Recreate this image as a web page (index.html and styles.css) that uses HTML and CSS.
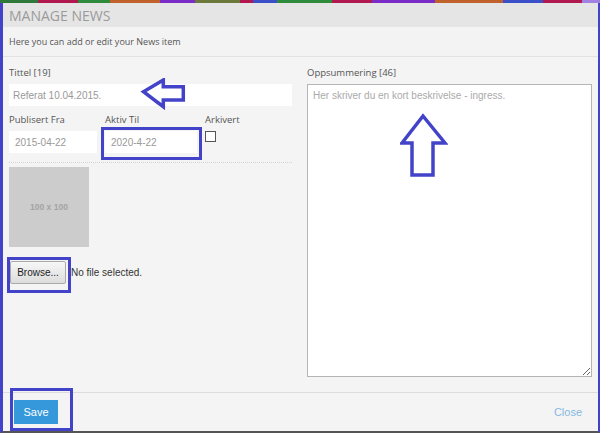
FILE: index.html
```html
<!DOCTYPE html>
<html lang="no">
<head>
    <meta charset="UTF-8">
    <meta name="viewport" content="width=device-width, initial-scale=1.0">
    <title>Manage News</title>
    <link rel="stylesheet" href="styles.css">
</head>
<body>
    <div class="stripe"></div>
    <div class="modal">
        <div class="modal-head">
            <h2>MANAGE NEWS</h2>
        </div>
        <div class="modal-sub">Here you can add or edit your News item</div>

        <div class="modal-body">
            <div class="col-left">
                <label>Tittel [19]</label>
                <div class="field">
                    <input class="text-input title-input" type="text" value="Referat 10.04.2015.">
                    <!-- annotation arrow -->
                    <svg class="arrow-left" width="46" height="32" viewBox="0 0 46 32">
                        <path d="M3.5 13.7 L23.3 2 L23.3 8.7 L43.3 8.7 L43.3 22 L23.3 22 L23.3 28.7 Z" />
                    </svg>
                </div>

                <div class="row3">
                    <div>
                        <label>Publisert Fra</label>
                        <input class="text-input date-input" type="text" value="2015-04-22">
                    </div>
                    <div>
                        <label>Aktiv Til</label>
                        <div class="field">
                            <input class="text-input date-input" type="text" value="2020-4-22">
                            <span class="mark mark-date"></span>
                        </div>
                    </div>
                    <div>
                        <label>Arkivert</label>
                        <input class="check" type="checkbox">
                    </div>
                </div>

                <div class="divider"></div>

                <div class="thumb">100 x 100</div>

                <div class="file-row">
                    <span class="field">
                        <button class="browse">Browse...</button>
                        <span class="mark mark-browse"></span>
                    </span>
                    <span class="file-name">No file selected.</span>
                </div>
            </div>

            <div class="col-right">
                <label>Oppsummering [46]</label>
                <div class="field">
                    <textarea class="summary" placeholder="Her skriver du en kort beskrivelse - ingress."></textarea>
                    <svg class="arrow-up" width="48" height="66" viewBox="0 0 48 66">
                        <path d="M23 3 L45 30 L33 30 L33 62 L12 62 L12 30 L2 30 Z" />
                    </svg>
                </div>
            </div>
        </div>

        <div class="modal-foot">
            <span class="field">
                <button class="save">Save</button>
                <span class="mark mark-save"></span>
            </span>
            <a class="close" href="#">Close</a>
        </div>
    </div>
</body>
</html>
```

FILE: styles.css
```css
* {
    box-sizing: border-box;
}
body {
    margin: 0;
    font-family: 'Open Sans', sans-serif;
    background: #f4f4f4;
}
.stripe {
    height: 3px;
    background: linear-gradient(90deg,
        #2f7a3a 0 38px, #b0184f 38px 78px, #2e8b3c 78px 110px,
        #c0602a 110px 160px, #7a2bc8 160px 195px, #6b7a3a 195px 240px,
        #b0184f 240px 253px, #3a4fc8 253px 277px, #2e8b3c 277px 332px,
        #b0184f 332px 372px, #7a2bc8 372px 435px, #c0602a 435px 503px,
        #3a4fc8 503px 543px, #b0184f 543px 582px, #a080e0 582px);
}
.modal {
    height: 430px;
    display: flex;
    flex-direction: column;
    background: #f4f4f4;
    border-left: 3px solid #4343c9;
    border-right: 2px solid #4343c9;
    border-bottom: 2px solid #555;
}
.modal-head {
    height: 24px;
    background: #e5e5e5;
    padding: 0 6px;
    display: flex;
    align-items: center;
}
.modal-head h2 {
    margin: 0;
    font-size: 14px;
    font-weight: 400;
    color: #9b9b9b;
}
.modal-sub {
    height: 30px;
    background: #f3f3f3;
    border-bottom: 1px solid #e2e2e2;
    padding: 0 6px;
    display: flex;
    align-items: center;
    font-size: 9px;
    color: #555;
}
.modal-body {
    flex: 1;
    display: grid;
    grid-template-columns: 283px 1fr;
    column-gap: 15px;
    padding: 9px 6px 0 6px;
}
label {
    display: block;
    font-size: 9.5px;
    line-height: 14px;
    color: #555;
    margin-bottom: 4px;
}
.field {
    position: relative;
    display: block;
}
.text-input {
    display: block;
    width: 100%;
    height: 22px;
    border: 0;
    outline: none;
    background: #fff;
    padding: 0 4px;
    font: 10px 'Liberation Sans', Arial, sans-serif;
    color: #999;
}
.date-input {
    padding: 0 6px;
}
.row3 {
    display: grid;
    grid-template-columns: 88px 92px auto;
    column-gap: 8px;
    margin-top: 7px;
}
.check {
    appearance: none;
    -webkit-appearance: none;
    display: block;
    width: 11px;
    height: 11px;
    margin: 3px 0 0 0;
    border: 1px solid #555;
    background: #fff;
}
.divider {
    margin-top: 9px;
    border-top: 1px dotted #d4d4d4;
}
.thumb {
    width: 80px;
    height: 80px;
    margin-top: 4px;
    background: #cccccc;
    display: flex;
    align-items: center;
    justify-content: center;
    font: bold 8.5px 'Liberation Sans', Arial, sans-serif;
    color: #a3a3a3;
}
.file-row {
    display: flex;
    align-items: center;
    margin-top: 14px;
    margin-left: 1px;
}
.file-row .field {
    display: inline-block;
}
.browse {
    display: block;
    height: 23px;
    width: 56px;
    padding: 0;
    border: 1px solid #aaa;
    border-radius: 2px;
    background: linear-gradient(#f7f7f7, #dcdcdc);
    font: 10px 'Liberation Sans', Arial, sans-serif;
    color: #222;
}
.file-name {
    margin-left: 5px;
    font: 10px 'Liberation Sans', Arial, sans-serif;
    color: #333;
}
.summary {
    display: block;
    width: 100%;
    height: 293px;
    border: 1px solid #b5b5b5;
    background: #fff;
    padding: 5px 5px;
    font: 10px 'Liberation Sans', Arial, sans-serif;
    color: #555;
    outline: none;
}
.summary::placeholder {
    color: #aaa;
}
.modal-foot {
    height: 39px;
    border-top: 1px solid #dcdcdc;
    padding: 7px 16px 0 11px;
    display: flex;
    justify-content: space-between;
    align-items: flex-start;
}
.save {
    display: block;
    width: 44px;
    height: 24px;
    border: 0;
    padding: 0;
    background: #3498db;
    color: #fff;
    font: 11px 'Liberation Sans', Arial, sans-serif;
}
.close {
    font: 11px 'Liberation Sans', Arial, sans-serif;
    line-height: 24px;
    color: #86b8e3;
    text-decoration: none;
}
/* Annotation overlays */
.mark {
    position: absolute;
    border: 3px solid #4343c9;
    pointer-events: none;
}
.mark-date {
    top: -4px;
    left: -4px;
    right: -5px;
    bottom: -7px;
}
.mark-browse {
    top: -4px;
    left: -3px;
    right: -5px;
    bottom: -9px;
}
.mark-save {
    top: -12px;
    left: -4px;
    right: -15px;
    bottom: -7px;
}
.arrow-left,
.arrow-up {
    position: absolute;
    fill: none;
    stroke: #4343c9;
    stroke-width: 3.5;
    stroke-linejoin: miter;
}
.arrow-left {
    left: 131px;
    top: -6px;
}
.arrow-up {
    left: 93px;
    top: 29px;
}
```
